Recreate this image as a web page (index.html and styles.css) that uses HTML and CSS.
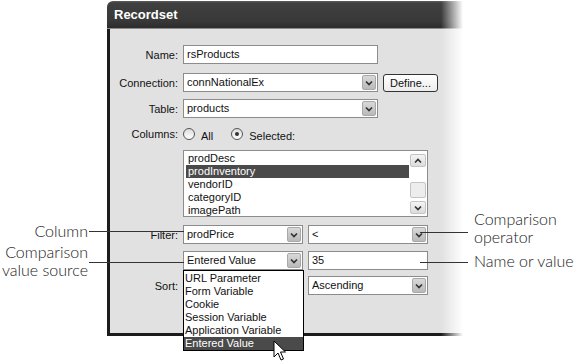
FILE: index.html
```html
<!DOCTYPE html>
<html lang="en">
<head>
  <meta charset="UTF-8">
  <title>Recordset</title>
  <link rel="stylesheet" href="styles.css">
</head>
<body>
  <div class="page">
    <div class="dialog">
      <div class="titlebar">Recordset</div>
      <div class="dialog-body">
        <div class="row row-name">
          <span class="lbl">Name:</span>
          <div class="field w-195">rsProducts</div>
        </div>
        <div class="row row-conn">
          <span class="lbl">Connection:</span>
          <div class="field select w-195">
            <span class="val">connNationalEx</span>
            <span class="arrow"><svg width="8" height="6" viewBox="0 0 8 6"><path d="M1 1.5 L4 4.5 L7 1.5" fill="none" stroke="#333" stroke-width="1.7"/></svg></span>
          </div>
          <div class="button">Define...</div>
        </div>
        <div class="row row-table">
          <span class="lbl">Table:</span>
          <div class="field select w-195">
            <span class="val">products</span>
            <span class="arrow"><svg width="8" height="6" viewBox="0 0 8 6"><path d="M1 1.5 L4 4.5 L7 1.5" fill="none" stroke="#333" stroke-width="1.7"/></svg></span>
          </div>
        </div>
        <div class="row row-cols">
          <span class="lbl">Columns:</span>
          <span class="radio"></span>
          <span class="radio-text">All</span>
          <span class="radio checked"></span>
          <span class="radio-text">Selected:</span>
        </div>
        <div class="row row-list">
          <span class="lbl"></span>
          <div class="listbox">
            <div class="list-items">
              <div class="item">prodDesc</div>
              <div class="item selected">prodInventory</div>
              <div class="item">vendorID</div>
              <div class="item">categoryID</div>
              <div class="item">imagePath</div>
            </div>
            <div class="scrollbar">
              <div class="sb-btn"><svg width="8" height="6" viewBox="0 0 8 6"><path d="M1 4.5 L4 1.5 L7 4.5" fill="none" stroke="#333" stroke-width="1.7"/></svg></div>
              <div class="sb-track"><div class="sb-thumb"></div></div>
              <div class="sb-btn"><svg width="8" height="6" viewBox="0 0 8 6"><path d="M1 1.5 L4 4.5 L7 1.5" fill="none" stroke="#333" stroke-width="1.7"/></svg></div>
            </div>
          </div>
        </div>
        <div class="row row-filter">
          <span class="lbl">Filter:</span>
          <div class="field select w-120">
            <span class="val">prodPrice</span>
            <span class="arrow"><svg width="8" height="6" viewBox="0 0 8 6"><path d="M1 1.5 L4 4.5 L7 1.5" fill="none" stroke="#333" stroke-width="1.7"/></svg></span>
          </div>
          <div class="field select w-120">
            <span class="val">&lt;</span>
            <span class="arrow"><svg width="8" height="6" viewBox="0 0 8 6"><path d="M1 1.5 L4 4.5 L7 1.5" fill="none" stroke="#333" stroke-width="1.7"/></svg></span>
          </div>
        </div>
        <div class="row row-value">
          <span class="lbl"></span>
          <div class="source">
            <div class="field select w-120">
              <span class="val">Entered Value</span>
              <span class="arrow"><svg width="8" height="6" viewBox="0 0 8 6"><path d="M1 1.5 L4 4.5 L7 1.5" fill="none" stroke="#333" stroke-width="1.7"/></svg></span>
            </div>
            <div class="dropdown">
              <div class="item">URL Parameter</div>
              <div class="item">Form Variable</div>
              <div class="item">Cookie</div>
              <div class="item">Session Variable</div>
              <div class="item">Application Variable</div>
              <div class="item selected">Entered Value</div>
            </div>
          </div>
          <div class="field w-120">35</div>
        </div>
        <div class="row row-sort">
          <span class="lbl">Sort:</span>
          <div class="spacer"></div>
          <div class="field select w-120">
            <span class="val">Ascending</span>
            <span class="arrow"><svg width="8" height="6" viewBox="0 0 8 6"><path d="M1 1.5 L4 4.5 L7 1.5" fill="none" stroke="#333" stroke-width="1.7"/></svg></span>
          </div>
        </div>
      </div>
    </div>

    <!-- callouts -->
    <div class="callout callout-column">Column</div>
    <div class="leader leader-column"></div>
    <div class="callout callout-source">Comparison<br>value source</div>
    <div class="leader leader-source"></div>
    <div class="callout callout-operator">Comparison<br>operator</div>
    <div class="leader leader-operator"></div>
    <div class="callout callout-value">Name or value</div>
    <div class="leader leader-value"></div>

    <svg class="cursor" width="14" height="22" viewBox="0 0 14 22">
      <path d="M1 1 L1 17 L5 13 L8 20 L10.5 19 L7.5 12 L12.5 12 Z" fill="#fff" stroke="#000" stroke-width="1" stroke-linejoin="miter"/>
    </svg>
  </div>
</body>
</html>
```

FILE: styles.css
```css
:root {
  --dialog-bg: #e1e1e1;
  --dialog-edge: #1c1c1c;
  --field-border: #8c8c8c;
  --text: #111111;
  --select-bg: #4a4a4a;
  --callout-text: #222222;
}

body {
  margin: 0;
  background: #ffffff;
  font-family: 'Liberation Sans', Arial, sans-serif;
  font-size: 11px;
  color: var(--text);
}

.page {
  position: relative;
  width: 576px;
  height: 364px;
  overflow: hidden;
}

/* Dialog window */
.dialog {
  position: relative;
  margin-left: 107px;
  width: 356px;
}

.dialog::after {
  content: "";
  position: absolute;
  top: 0;
  right: 0;
  bottom: 0;
  width: 22px;
  background: linear-gradient(to right, rgba(255,255,255,0), #ffffff);
}

.titlebar {
  margin-top: 1px;
  height: 27px;
  border-top-left-radius: 6px;
  background: linear-gradient(to bottom, #5e5e5e 0, #404040 2px, #383838 20px, #2c2c2c 100%);
  border-bottom: 1px solid #8a8a8a;
  color: #ffffff;
  font-weight: bold;
  font-size: 13px;
  line-height: 28px;
  padding-left: 7px;
}

.dialog-body {
  background: var(--dialog-bg);
  border-left: 3px solid var(--dialog-edge);
  border-bottom: 3px solid var(--dialog-edge);
  padding-top: 16px;
  box-sizing: border-box;
  height: 307px;
}

.row {
  display: flex;
  align-items: center;
  gap: 5px;
}

.lbl {
  width: 68px;
  flex: none;
  text-align: right;
}

.row-name { margin-bottom: 9px; }
.row-conn { margin-bottom: 7px; }
.row-table { margin-bottom: 9px; }
.row-cols { height: 14px; margin-bottom: 9px; }
.row-list { align-items: flex-start; margin-bottom: 8px; }
.row-filter { margin-bottom: 7px; }
.row-value { margin-bottom: 6px; }

/* Text fields and selects */
.field {
  display: flex;
  align-items: center;
  height: 19px;
  box-sizing: border-box;
  border: 1px solid var(--field-border);
  background: #ffffff;
  padding-left: 3px;
  line-height: 17px;
  white-space: nowrap;
}

.w-195 { width: 195px; }
.w-120 { width: 120px; }

.select .val {
  flex: 1;
  overflow: hidden;
}

.arrow {
  width: 14px;
  height: 15px;
  margin-right: 1px;
  box-sizing: border-box;
  border: 1px solid #a8a8a8;
  border-radius: 2px;
  background: linear-gradient(to bottom, #d9d9d9, #b9b9b9);
  display: flex;
  align-items: center;
  justify-content: center;
}

.button {
  width: 55px;
  height: 18px;
  box-sizing: border-box;
  border: 1px solid #333333;
  border-radius: 3px;
  background: linear-gradient(to bottom, #ffffff, #ececec);
  text-align: center;
  line-height: 16px;
}

/* Radio buttons */
.radio {
  width: 12px;
  height: 12px;
  box-sizing: border-box;
  border: 1px solid #555555;
  border-radius: 50%;
  background: linear-gradient(to bottom, #dcdcdc, #ffffff);
}

.radio.checked {
  margin-left: 13px;
  display: flex;
  align-items: center;
  justify-content: center;
}

.radio.checked::before {
  content: "";
  width: 4px;
  height: 4px;
  border-radius: 50%;
  background: #333333;
}

.radio-text {
  margin-left: 1px;
  padding-top: 3px;
}

/* Column list */
.listbox {
  display: flex;
  width: 245px;
  height: 67px;
  box-sizing: border-box;
  border: 1px solid var(--field-border);
  background: #ffffff;
}

.list-items {
  flex: 1;
  padding: 1px 1px 0 2px;
}

.item {
  height: 13px;
  line-height: 13px;
  padding-left: 2px;
  white-space: nowrap;
}

.item.selected {
  background: var(--select-bg);
  color: #ffffff;
}

.scrollbar {
  width: 17px;
  display: flex;
  flex-direction: column;
  padding: 3px 1px 2px 0;
  box-sizing: border-box;
}

.sb-btn {
  height: 13px;
  box-sizing: border-box;
  border: 1px solid #c4c4c4;
  border-radius: 2px;
  background: linear-gradient(to bottom, #f4f4f4, #dcdcdc);
  display: flex;
  align-items: center;
  justify-content: center;
}

.sb-track {
  flex: 1;
  display: flex;
  align-items: flex-end;
  padding-bottom: 3px;
}

.sb-thumb {
  width: 100%;
  height: 16px;
  box-sizing: border-box;
  border: 1px solid #c4c4c4;
  border-radius: 2px;
  background: #ededed;
}

/* Open dropdown */
.source {
  position: relative;
}

.dropdown {
  position: absolute;
  top: 19px;
  left: 0;
  width: 121px;
  box-sizing: border-box;
  border: 1px solid #000000;
  background: #ffffff;
  padding-top: 1px;
  z-index: 2;
}

.dropdown .item {
  padding-left: 1px;
}

.spacer {
  width: 120px;
}

/* Callouts */
.callout {
  position: absolute;
  font-family: Lato, 'Open Sans', sans-serif;
  font-weight: 300;
  font-size: 16px;
  line-height: 18px;
  color: var(--callout-text);
  white-space: nowrap;
  z-index: 3;
}

.callout-column {
  top: 222px;
  right: 488px;
  text-align: right;
}

.callout-source {
  top: 243px;
  right: 488px;
  text-align: right;
}

.callout-operator {
  top: 210px;
  left: 474px;
}

.callout-value {
  top: 252px;
  left: 474px;
}

.leader {
  position: absolute;
  height: 1px;
  background: #333333;
  z-index: 3;
}

.leader-column { top: 231px; left: 89px; width: 95px; }
.leader-source { top: 262px; left: 89px; width: 95px; }
.leader-operator { top: 232px; left: 420px; width: 48px; }
.leader-value { top: 262px; left: 420px; width: 48px; }

.cursor {
  position: absolute;
  left: 273px;
  top: 340px;
  z-index: 4;
}
```
